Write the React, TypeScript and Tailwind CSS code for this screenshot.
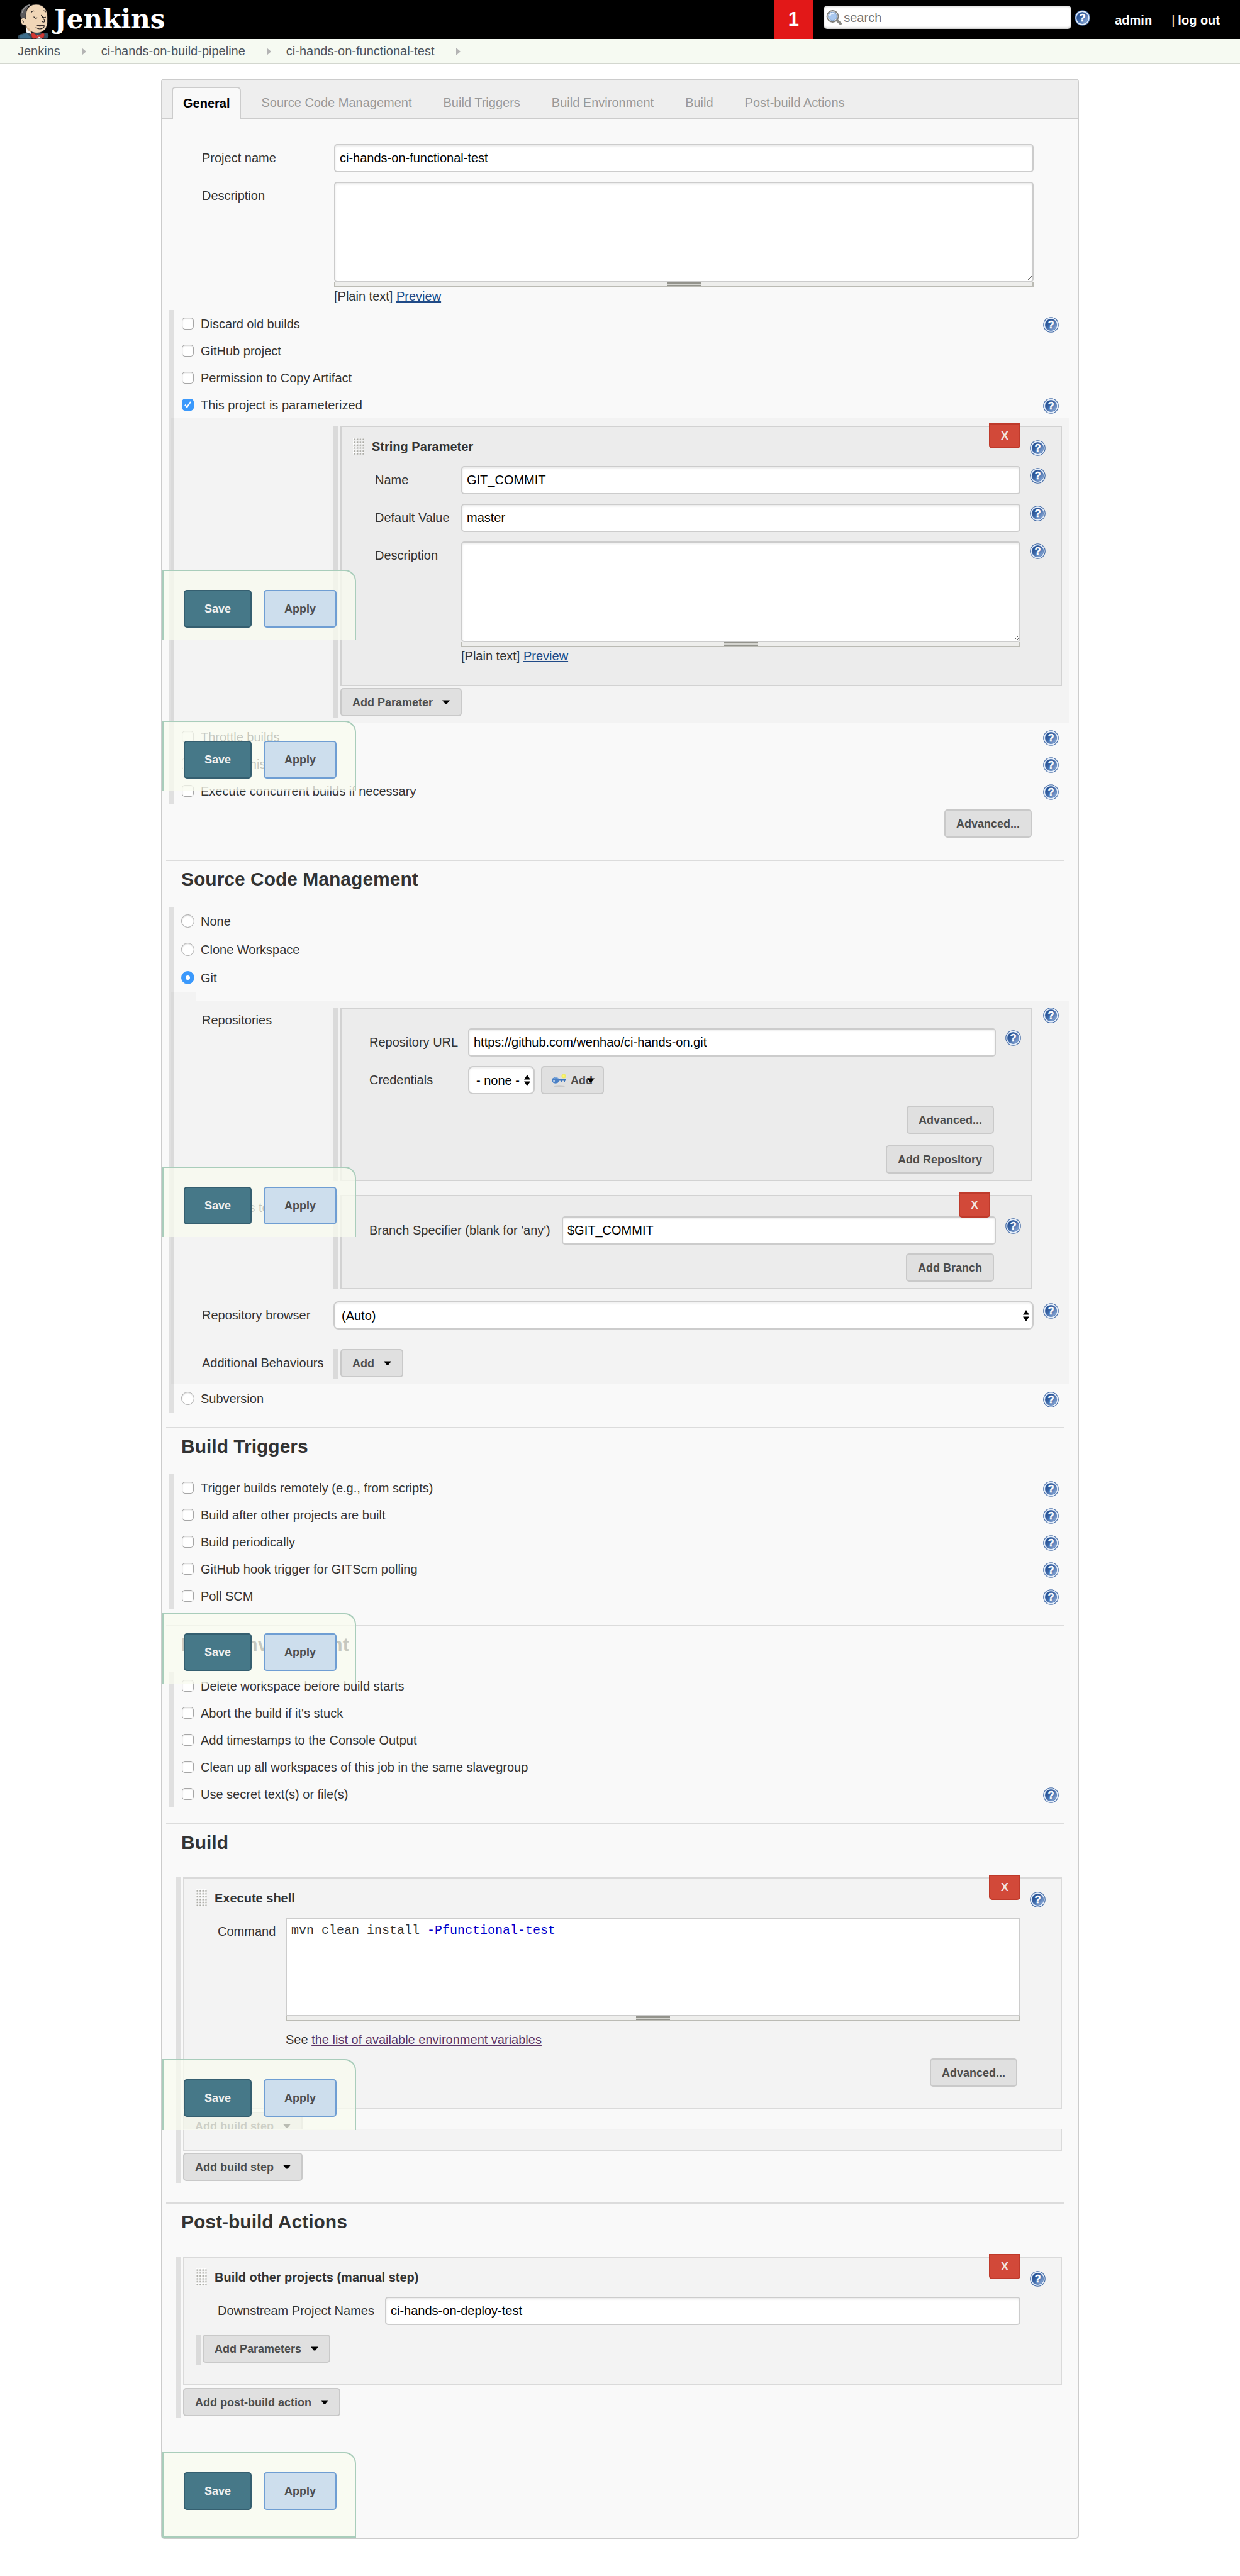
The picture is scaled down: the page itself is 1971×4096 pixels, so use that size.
import React, { useState } from "react";

/* ---------- icons ---------- */

function HelpGlyph() {
  return (
    <svg viewBox="0 0 24 24" className="size-[25px]" aria-hidden="true">
      <defs>
        <linearGradient id="helpBlue" x1="0" y1="0" x2="1" y2="1">
          <stop offset="0" stopColor="#1b4384" />
          <stop offset="0.45" stopColor="#3c66a6" />
          <stop offset="1" stopColor="#9db9e2" />
        </linearGradient>
      </defs>
      <circle cx="12" cy="12" r="11.8" fill="#4169a5" />
      <circle cx="12" cy="12" r="10.7" fill="#e4edf9" />
      <circle cx="12" cy="12" r="9.2" fill="#5a80b8" />
      <circle cx="12" cy="12" r="8.6" fill="url(#helpBlue)" />
      <text
        x="12"
        y="17.6"
        textAnchor="middle"
        fontFamily="Liberation Sans, Arial, sans-serif"
        fontWeight="700"
        fontSize="16"
        fill="#ffffff"
        stroke="#ffffff"
        strokeWidth="0.4"
      >
        ?
      </text>
    </svg>
  );
}

function Help({ topic }: { topic: string }) {
  return (
    <a href="#help" aria-label={`Help for feature: ${topic}`} className="block size-[25px]">
      <HelpGlyph />
    </a>
  );
}

function Caret() {
  return (
    <svg viewBox="0 0 12 7" className="h-[7px] w-3" aria-hidden="true">
      <path d="M0 0.5H12L7.2 6.6H4.8Z" fill="#000" />
    </svg>
  );
}

function ArrowRight() {
  return (
    <svg viewBox="0 0 7 12" className="h-3 w-[7px]" aria-hidden="true">
      <path d="M0 0L7 6L0 12Z" fill="#b4b4b4" />
    </svg>
  );
}

function SearchGlyph() {
  return (
    <svg viewBox="0 0 26 24" className="h-6 w-[26px]" aria-hidden="true">
      <path d="M17 16L23 21.5" stroke="#8a8a86" strokeWidth="4" strokeLinecap="round" />
      <circle cx="10.5" cy="10" r="9" fill="#e8e8e6" stroke="#7d7d79" strokeWidth="1.8" />
      <circle cx="10.5" cy="10" r="6.8" fill="#a9c8ef" stroke="#7f9fcb" strokeWidth="1" />
      <path d="M6 9A5 5 0 0 1 13 5.5" stroke="#e6f1fd" strokeWidth="2.4" fill="none" />
    </svg>
  );
}

function KeyGlyph() {
  return (
    <svg viewBox="0 0 24 24" className="size-6" aria-hidden="true">
      <ellipse cx="12" cy="21.5" rx="9" ry="1.2" fill="#c9c9c9" />
      <circle cx="19" cy="5" r="3.6" fill="#eeea6a" />
      <circle cx="19" cy="5" r="1.6" fill="#fff86b" />
      <path d="M9 9.5H23V12.5H21V14H19V12.5H17V14H15V12.5H9Z" fill="#3f76bd" />
      <ellipse cx="6" cy="11.8" rx="5.6" ry="5" fill="#4a80c6" />
      <path d="M2.5 9.5A5 4 0 0 1 10 8.5" stroke="#86aedd" strokeWidth="1.2" fill="none" />
      <circle cx="3.6" cy="12.8" r="1.5" fill="#b9cfe8" />
    </svg>
  );
}

function Grip() {
  return (
    <svg viewBox="0 0 18 28" className="h-7 w-[18px]" aria-hidden="true">
      <defs>
        <pattern id="gripDots" width="4.6" height="4.6" patternUnits="userSpaceOnUse">
          <rect x="0" y="0" width="3.2" height="3.2" fill="#ffffff" />
          <rect x="1.4" y="1.4" width="2.4" height="2.4" fill="#aaaaa4" />
        </pattern>
      </defs>
      <rect width="18" height="28" fill="url(#gripDots)" />
    </svg>
  );
}

function Butler() {
  return (
    <svg viewBox="0 0 195 215" className="h-14 w-[50px] shrink-0" aria-hidden="true">
      <path d="M2 215L6 190L58 176L150 178L184 180L193 192L184 215Z" fill="#335061" />
      <path d="M14 194L56 180L86 215H10Z" fill="#3f6f8c" />
      <path d="M18 78C12 40 40 4 84 0C60 12 50 40 52 84L40 120L24 96Z" fill="#5c5a5c" />
      <path d="M28 54C34 28 52 12 74 6" stroke="#9a9a9a" strokeWidth="6" fill="none" />
      <path d="M50 140L54 176L88 186L80 160Z" fill="#f7f7f7" />
      <path
        d="M54 48C64 14 86 2 116 2C158 2 184 34 184 74C186 118 184 146 164 162C142 182 112 184 86 172C66 162 58 150 50 132L34 130C20 126 14 96 28 88C38 82 46 88 50 96C50 78 50 62 54 48Z"
        fill="#f0d6b7"
        stroke="#231f20"
        strokeWidth="3"
      />
      <path d="M54 142C58 158 68 168 84 178L76 154Z" fill="#d9b48d" />
      <path d="M28 104C36 98 40 108 34 118" stroke="#231f20" strokeWidth="3" fill="none" />
      <path
        d="M82 56C88 44 98 40 104 44M156 44C162 40 170 42 174 50"
        stroke="#231f20"
        strokeWidth="5"
        fill="none"
      />
      <path
        d="M100 78C104 88 116 92 122 84M152 76C158 84 168 86 174 80"
        stroke="#231f20"
        strokeWidth="5"
        fill="none"
      />
      <path d="M146 68C150 84 170 98 168 108C162 114 156 112 152 108" stroke="#231f20" strokeWidth="4" fill="none" />
      <path d="M116 136C126 126 138 125 148 130C156 127 164 128 168 133C158 139 130 142 116 136Z" fill="#3a3030" />
      <path d="M112 144C128 158 150 158 166 140" stroke="#231f20" strokeWidth="4" fill="none" />
      <path d="M122 190L142 190L150 215H118Z" fill="#ffffff" />
      <path
        d="M86 182C96 176 112 186 122 196L144 186C156 178 164 180 166 190L162 208C150 212 138 206 132 202L124 212L96 215C88 208 84 196 86 182Z"
        fill="#d33833"
        stroke="#81231f"
        strokeWidth="2"
      />
    </svg>
  );
}

/* ---------- controls ---------- */

function PlainButton({ children, menu, className = "" }: { children: React.ReactNode; menu?: boolean; className?: string }) {
  return (
    <button
      type="button"
      className={`flex h-[45px] items-center gap-[15px] rounded-[5px] border-2 border-[#c9c9c9] bg-[#e0e0e0] px-[17px] text-[18px] font-bold text-[#4d4d4d] ${className}`}
    >
      {children}
      {menu && <Caret />}
    </button>
  );
}

function DeleteButton({ className }: { className: string }) {
  return (
    <button
      type="button"
      aria-label="Delete"
      className={`absolute -top-[6px] h-10 w-[50px] rounded-b-[5px] border-2 border-[#bf3a2b] bg-[#d24939] text-[18px] font-bold text-[#f1e4e2] ${className}`}
    >
      X
    </button>
  );
}

function TextInput({ id, value }: { id: string; value: string }) {
  const [text, setText] = useState(value);
  return (
    <input
      id={id}
      type="text"
      value={text}
      onChange={(e) => setText(e.target.value)}
      className="block h-[45px] w-full rounded-[5px] border-2 border-[#cccccc] bg-white px-[7px] text-black shadow-[inset_0_2px_3px_rgba(0,0,0,0.08)]"
    />
  );
}

function ResizeHandle() {
  return (
    <div className="flex h-2 items-start justify-center border-x-2 border-b-2 border-[#bbbbb4] bg-[#eeeeec]">
      <div className="h-[6px] w-[54px] border-y-2 border-[#93938c] bg-[#d4d4cf]" />
    </div>
  );
}

function DescriptionBox({ id }: { id: string }) {
  return (
    <div>
      <textarea
        id={id}
        className="block h-40 w-full rounded-[5px] border-2 border-[#cccccc] bg-white p-2 text-black shadow-[inset_0_2px_3px_rgba(0,0,0,0.08)]"
      />
      <ResizeHandle />
      <p className="leading-7">
        [Plain text]{" "}
        <a href="#preview" className="text-[#204a87] underline">
          Preview
        </a>
      </p>
    </div>
  );
}

function UpDown() {
  return (
    <svg
      viewBox="0 0 10 18"
      className="pointer-events-none absolute top-[14px] right-[7px] h-[18px] w-[10px]"
      aria-hidden="true"
    >
      <path d="M0 7.5L5 0L10 7.5ZM0 10.5L5 18L10 10.5Z" fill="#000" />
    </svg>
  );
}

function Select({ id, option, className }: { id: string; option: string; className: string }) {
  return (
    <div className={`relative ${className}`}>
      <select
        id={id}
        className="h-[45px] w-full appearance-none rounded-lg border-2 border-[#cccccc] bg-white pl-[11px] text-black shadow-[inset_0_2px_3px_rgba(0,0,0,0.06)]"
      >
        <option>{option}</option>
      </select>
      <UpDown />
    </div>
  );
}

function CheckRow({ id, label, help, checked = false }: { id: string; label: string; help?: boolean; checked?: boolean }) {
  const [on, setOn] = useState(checked);
  return (
    <div className="flex h-[43px] items-center pl-3 pr-[30px]">
      <span className="relative size-[19px]">
        <input
          id={id}
          type="checkbox"
          checked={on}
          onChange={(e) => setOn(e.target.checked)}
          className="block size-[19px] appearance-none rounded-[5px] border border-[#a6a6a6] bg-white shadow-[inset_0_1px_2px_rgba(0,0,0,0.18)] checked:border-[#3b99fc] checked:bg-[#3b99fc] checked:shadow-none"
        />
        {on && (
          <svg viewBox="0 0 19 19" className="pointer-events-none absolute inset-0" aria-hidden="true">
            <path d="M5 9.5L8.2 13.5L14 4.8" stroke="#fff" strokeWidth="2.2" fill="none" />
          </svg>
        )}
      </span>
      <label htmlFor={id} className="ml-[11px] flex-1">
        {label}
      </label>
      {help && (
        <div className="pt-1">
          <Help topic={label} />
        </div>
      )}
    </div>
  );
}

function RadioRow({
  value,
  label,
  selected,
  onSelect,
  help,
}: {
  value: string;
  label: string;
  selected: string;
  onSelect: (v: string) => void;
  help?: boolean;
}) {
  const id = `scm-${value}`;
  return (
    <div className="flex h-[45px] items-center pl-[11px] pr-[30px]">
      <span className="relative size-[21px]">
        <input
          id={id}
          type="radio"
          name="scm"
          checked={selected === value}
          onChange={() => onSelect(value)}
          className="block size-[21px] appearance-none rounded-full border border-[#a6a6a6] bg-white shadow-[inset_0_1px_2px_rgba(0,0,0,0.18)] checked:border-[#3b99fc] checked:bg-[#3b99fc] checked:shadow-none"
        />
        {selected === value && (
          <span className="pointer-events-none absolute top-[7px] left-[7px] size-[7px] rounded-full bg-white" />
        )}
      </span>
      <label htmlFor={id} className="ml-[10px] flex-1">
        {label}
      </label>
      {help && (
        <div className="pt-1">
          <Help topic={label} />
        </div>
      )}
    </div>
  );
}

/* ---------- layout pieces ---------- */

function SectionTitle({ children, className }: { children: React.ReactNode; className: string }) {
  return (
    <h2
      className={`mr-[22px] mb-[15px] ml-[6px] border-t-2 border-[#dcdcdc] pl-6 text-[30px] leading-[58px] font-bold ${className}`}
    >
      {children}
    </h2>
  );
}

function Group({ children }: { children: React.ReactNode }) {
  return <div className="ml-[11px] border-l-8 border-[#e0e0e0]">{children}</div>;
}

function Chunk({ title, children, className }: { title: string; children: React.ReactNode; className: string }) {
  return (
    <div className={`relative border-2 ${className}`}>
      <DeleteButton className="right-[64px]" />
      <div className="flex h-[62px] items-center pr-6 pl-[18px]">
        <Grip />
        <h3 className="ml-3 flex-1 font-bold">{title}</h3>
        <div className="pt-1">
          <Help topic={title} />
        </div>
      </div>
      {children}
    </div>
  );
}

function ChunkField({
  id,
  label,
  labelWidth,
  help,
  children,
}: {
  id: string;
  label: string;
  labelWidth: string;
  help?: boolean;
  children: React.ReactNode;
}) {
  return (
    <div className="flex items-start">
      <label id={`${id}-label`} htmlFor={id} className={`shrink-0 pl-[53px] leading-[45px] ${labelWidth}`}>
        {label}
      </label>
      <div className="min-w-0 flex-1">{children}</div>
      <div className="w-16 shrink-0 pt-[3px] pl-[15px]">{help && <Help topic={label} />}</div>
    </div>
  );
}

function SaveBar({ className }: { className: string }) {
  return (
    <div className={`w-[308px] rounded-tr-[18px] border-2 border-[#a9cdbb] bg-[#f8fbef]/75 pl-8 ${className}`}>
      <div className="flex gap-[19px] pt-[30px]">
        <button
          type="submit"
          className="h-[60px] w-[108px] rounded-[5px] border-2 border-[#355f70] bg-[#467888] text-[18px] font-bold text-[#f1f1f1]"
        >
          Save
        </button>
        <button
          type="button"
          className="h-[60px] w-[116px] rounded-[5px] border-2 border-[#6f9ed3] bg-[#cddeed] text-[18px] font-bold text-[#4d4d4d]"
        >
          Apply
        </button>
      </div>
    </div>
  );
}

/* ---------- page ---------- */

const tabs = [
  "General",
  "Source Code Management",
  "Build Triggers",
  "Build Environment",
  "Build",
  "Post-build Actions",
];

const crumbs = ["Jenkins", "ci-hands-on-build-pipeline", "ci-hands-on-functional-test"];

export default function App() {
  const [tab, setTab] = useState("General");
  const [scm, setScm] = useState("git");

  return (
    <div className="min-h-screen bg-white font-['Liberation_Sans',Arial,sans-serif] text-[20px] leading-[24px] text-[#333333]">
      <header className="flex h-[62px] items-stretch bg-black pr-8 text-white">
        <a href="#home" className="flex items-end pl-7">
          <Butler />
          <span className="ml-2 font-['DejaVu_Serif',serif] text-[42px] leading-[62px] font-bold">Jenkins</span>
        </a>
        <div className="flex-1" />
        <a
          href="#alerts"
          className="flex w-[62px] items-center justify-center bg-[#e21818] text-[31px] font-bold text-white"
        >
          1
        </a>
        <div className="mt-[9px] ml-[17px] flex h-[37px] w-[394px] items-center rounded-[6px] bg-white pl-1 shadow-[inset_0_-2px_3px_rgba(0,0,0,0.2),inset_0_2px_3px_rgba(0,0,0,0.15)]">
          <SearchGlyph />
          <input
            type="text"
            aria-label="Search"
            placeholder="search"
            className="ml-[2px] min-w-0 flex-1 bg-transparent text-black outline-none placeholder:text-[#757575]"
          />
        </div>
        <div className="mt-4 ml-[5px]">
          <Help topic="Search box" />
        </div>
        <nav className="mt-5 ml-[39px] flex font-bold">
          <a href="#admin">admin</a>
          <span className="ml-[31px] font-normal">|</span>
          <a href="#logout" className="ml-[5px]">
            log out
          </a>
        </nav>
      </header>

      <nav
        aria-label="Breadcrumbs"
        className="flex h-10 items-center border-b-2 border-[#d3d7cf] bg-[#f6faf2] pl-7 text-[#4d545d]"
      >
        {crumbs.map((c) => (
          <span key={c} className="flex items-center">
            <a href="#crumb">{c}</a>
            <span className="mr-6 ml-[34px] pt-[2px]">
              <ArrowRight />
            </span>
          </span>
        ))}
      </nav>

      <main className="px-64 pt-[23px] pb-[58px]">
        <form
          onSubmit={(e) => e.preventDefault()}
          className="relative rounded-[5px] border-2 border-[#cccccc] bg-[#f9f9f9]"
        >
          <div
            role="tablist"
            className="flex gap-[14px] border-b-2 border-[#cccccc] bg-[#eeeeee] pt-[11px] pl-[15px]"
          >
            {tabs.map((t) => (
              <button
                key={t}
                type="button"
                role="tab"
                aria-selected={tab === t}
                onClick={() => setTab(t)}
                className={
                  tab === t
                    ? "-mb-[2px] h-[52px] rounded-t-[6px] border-2 border-b-0 border-[#cccccc] bg-[#f9f9f9] px-4 pb-[3px] font-bold text-black"
                    : "h-[50px] border-x-2 border-transparent px-4 text-[#999999]"
                }
              >
                {t}
              </button>
            ))}
          </div>

          {/* General */}
          <div className="flex pt-[39px]">
            <label htmlFor="name" className="w-[273px] pl-[63px] leading-[45px]">
              Project name
            </label>
            <div className="mr-[70px] flex-1">
              <TextInput id="name" value="ci-hands-on-functional-test" />
            </div>
          </div>
          <div className="mb-2 flex pt-[15px]">
            <label htmlFor="description" className="w-[273px] pl-[63px] leading-[45px]">
              Description
            </label>
            <div className="mr-[70px] flex-1">
              <DescriptionBox id="description" />
            </div>
          </div>

          <Group>
            <CheckRow id="discard" label="Discard old builds" help />
            <CheckRow id="github" label="GitHub project" />
            <CheckRow id="copy" label="Permission to Copy Artifact" />
            <CheckRow id="param" label="This project is parameterized" help checked />
            <div className="mr-[14px] -ml-[5px] bg-black/[0.025] pt-3 pr-[11px] pb-2 pl-[258px]">
              <div className="border-l-8 border-[#dadada] pb-[3px] pl-[3px]">
                <Chunk title="String Parameter" className="border-[#d2d2d2] bg-[#ececec] pb-8">
                  <ChunkField id="p-name" label="Name" labelWidth="w-[190px]" help>
                    <TextInput id="p-name" value="GIT_COMMIT" />
                  </ChunkField>
                  <div className="h-[15px]" />
                  <ChunkField id="p-default" label="Default Value" labelWidth="w-[190px]" help>
                    <TextInput id="p-default" value="master" />
                  </ChunkField>
                  <div className="h-[15px]" />
                  <ChunkField id="p-desc" label="Description" labelWidth="w-[190px]" help>
                    <DescriptionBox id="p-desc" />
                  </ChunkField>
                </Chunk>
                <PlainButton menu className="mt-[3px]">
                  Add Parameter
                </PlainButton>
              </div>
            </div>
            <CheckRow id="throttle" label="Throttle builds" help />
            <CheckRow id="disable" label="Disable this project" help />
            <CheckRow id="concurrent" label="Execute concurrent builds if necessary" help />
          </Group>
          <div className="mt-2 mr-[73px] flex justify-end">
            <PlainButton>Advanced...</PlainButton>
          </div>

          {/* Source Code Management */}
          <SectionTitle className="mt-[35px]">Source Code Management</SectionTitle>
          <Group>
            <RadioRow value="none" label="None" selected={scm} onSelect={setScm} />
            <RadioRow value="clone" label="Clone Workspace" selected={scm} onSelect={setScm} />
            <RadioRow value="git" label="Git" selected={scm} onSelect={setScm} />
            <div className="-ml-[5px] h-[15px] w-10 bg-black/[0.025]" />
            <div className="mr-[14px] -ml-[5px] bg-black/[0.025] pt-[10px] pb-2">
              <div className="flex">
                <div className="w-[258px] shrink-0 pl-[49px] leading-10">Repositories</div>
                <div className="mr-[3px] flex-1 border-l-8 border-[#dadada] pl-[3px]">
                  <div className="border-2 border-[#d2d2d2] bg-[#ececec] pt-[31px] pb-[10px] pl-11">
                    <div className="flex">
                      <label htmlFor="repo-url" className="w-[157px] shrink-0 leading-[45px]">
                        Repository URL
                      </label>
                      <div className="flex-1">
                        <TextInput id="repo-url" value="https://github.com/wenhao/ci-hands-on.git" />
                      </div>
                      <div className="w-[55px] pt-[3px] pl-[15px]">
                        <Help topic="Repository URL" />
                      </div>
                    </div>
                    <div className="mt-[15px] flex">
                      <label htmlFor="credentials" className="w-[157px] shrink-0 leading-[45px]">
                        Credentials
                      </label>
                      <Select id="credentials" option="- none -" className="w-[106px]" />
                      <button
                        type="button"
                        className="relative ml-[10px] flex h-[45px] w-[100px] items-center gap-[6px] rounded-[5px] border-2 border-[#c9c9c9] bg-[#e0e0e0] pl-[15px] text-[18px] font-bold text-[#4d4d4d]"
                      >
                        <KeyGlyph />
                        Add
                        <span className="absolute top-[17px] right-[13px] flex">
                          <Caret />
                        </span>
                      </button>
                    </div>
                    <div className="mt-[18px] mr-[58px] flex justify-end">
                      <PlainButton>Advanced...</PlainButton>
                    </div>
                    <div className="mt-[18px] mr-[58px] flex justify-end">
                      <PlainButton>Add Repository</PlainButton>
                    </div>
                  </div>
                </div>
                <div className="w-14 shrink-0 pl-[15px]">
                  <Help topic="Repositories" />
                </div>
              </div>

              <div className="mt-[22px] flex">
                <div className="w-[258px] shrink-0 pl-[49px] leading-10">Branches to build</div>
                <div className="mr-[59px] flex-1 border-l-8 border-[#dadada] pl-[3px]">
                  <div className="relative border-2 border-[#d2d2d2] bg-[#ececec] pt-8 pb-[10px] pl-11">
                    <DeleteButton className="right-[64px]" />
                    <div className="flex">
                      <label htmlFor="branch" className="w-[306px] shrink-0 leading-[45px]">
                        Branch Specifier (blank for 'any')
                      </label>
                      <div className="flex-1">
                        <TextInput id="branch" value="$GIT_COMMIT" />
                      </div>
                      <div className="w-[55px] pt-[3px] pl-[15px]">
                        <Help topic="Branch Specifier" />
                      </div>
                    </div>
                    <div className="mt-[14px] mr-[58px] flex justify-end">
                      <PlainButton>Add Branch</PlainButton>
                    </div>
                  </div>
                </div>
              </div>

              <div className="mt-[19px] flex">
                <label htmlFor="browser" className="w-[258px] shrink-0 pl-[49px] leading-[45px]">
                  Repository browser
                </label>
                <Select id="browser" option="(Auto)" className="flex-1" />
                <div className="w-14 shrink-0 pt-[3px] pl-[15px]">
                  <Help topic="Repository browser" />
                </div>
              </div>

              <div className="mt-[31px] flex">
                <div className="w-[258px] shrink-0 pl-[49px] leading-[45px]">Additional Behaviours</div>
                <div className="border-l-8 border-[#dadada] pb-[3px] pl-[3px]">
                  <PlainButton menu>Add</PlainButton>
                </div>
              </div>
            </div>
            <RadioRow value="svn" label="Subversion" selected={scm} onSelect={setScm} help />
          </Group>

          {/* Build Triggers */}
          <SectionTitle className="mt-[23px]">Build Triggers</SectionTitle>
          <Group>
            <CheckRow id="remote" label="Trigger builds remotely (e.g., from scripts)" help />
            <CheckRow id="after" label="Build after other projects are built" help />
            <CheckRow id="periodic" label="Build periodically" help />
            <CheckRow id="hook" label="GitHub hook trigger for GITScm polling" help />
            <CheckRow id="poll" label="Poll SCM" help />
          </Group>

          {/* Build Environment */}
          <SectionTitle className="mt-[25px]">Build Environment</SectionTitle>
          <Group>
            <CheckRow id="delete" label="Delete workspace before build starts" />
            <CheckRow id="abort" label="Abort the build if it's stuck" />
            <CheckRow id="timestamps" label="Add timestamps to the Console Output" />
            <CheckRow id="clean" label="Clean up all workspaces of this job in the same slavegroup" />
            <CheckRow id="secret" label="Use secret text(s) or file(s)" help />
          </Group>

          {/* Build */}
          <SectionTitle className="mt-[25px]">Build</SectionTitle>
          <div className="mt-[26px] mr-[25px] ml-[22px] border-l-8 border-[#e0e0e0] pb-[3px] pl-[3px]">
            <Chunk title="Execute shell" className="border-[#dadada] bg-[#f3f3f3] pb-[34px]">
              <ChunkField id="command" label="Command" labelWidth="w-[161px]">
                <div
                  id="command"
                  role="textbox"
                  aria-multiline="true"
                  aria-labelledby="command-label"
                  tabIndex={0}
                  className="h-[157px] border-2 border-[#cccccc] bg-white px-[7px] pt-[7px] font-['Liberation_Mono',monospace]"
                >
                  mvn clean install <span className="text-[#0000cc]">-Pfunctional-test</span>
                </div>
                <ResizeHandle />
                <p className="mt-[14px] leading-[30px]">
                  See{" "}
                  <a href="#env" className="text-[#5c3566] underline">
                    the list of available environment variables
                  </a>
                </p>
              </ChunkField>
              <div className="mt-[15px] mr-[69px] flex justify-end">
                <PlainButton>Advanced...</PlainButton>
              </div>
            </Chunk>
            <div className="mt-1 h-7 overflow-hidden">
              <PlainButton menu>Add build step</PlainButton>
            </div>
            <div className="h-[34px] border-2 border-t-0 border-[#dadada] bg-[#f3f3f3]" />
            <PlainButton menu className="mt-[3px]">
              Add build step
            </PlainButton>
          </div>

          {/* Post-build Actions */}
          <SectionTitle className="mt-[31px]">Post-build Actions</SectionTitle>
          <div className="mt-[26px] mr-[25px] ml-[22px] border-l-8 border-[#e0e0e0] pb-[3px] pl-[3px]">
            <Chunk title="Build other projects (manual step)" className="border-[#dadada] bg-[#f3f3f3] pb-[31px]">
              <ChunkField id="downstream" label="Downstream Project Names" labelWidth="w-[319px]">
                <TextInput id="downstream" value="ci-hands-on-deploy-test" />
              </ChunkField>
              <div className="mt-[15px] ml-[18px] border-l-8 border-[#dadada] pb-[3px] pl-[3px]">
                <PlainButton menu>Add Parameters</PlainButton>
              </div>
            </Chunk>
            <PlainButton menu className="mt-1">
              Add post-build action
            </PlainButton>
          </div>

          <SaveBar className="mt-[54px] h-[136px]" />

          {/* Save bars floating over the form */}
          <SaveBar className="absolute top-[779px] left-0 h-28 border-b-0" />
          <SaveBar className="absolute top-[1019px] left-0 h-28 border-b-0" />
          <SaveBar className="absolute top-[1728px] left-0 h-28 border-b-0" />
          <SaveBar className="absolute top-[2438px] left-0 h-28 border-b-0" />
          <SaveBar className="absolute top-[3147px] left-0 h-[113px] border-b-0" />
        </form>
      </main>
    </div>
  );
}
